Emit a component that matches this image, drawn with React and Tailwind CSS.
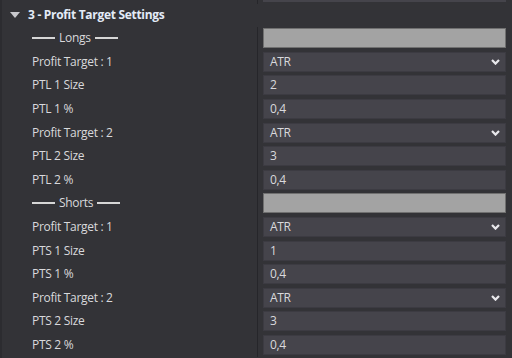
import React from 'react';

const rows = [
  { type: 'sep', label: 'Longs' },
  { type: 'select', label: 'Profit Target : 1', value: 'ATR' },
  { type: 'input', label: 'PTL 1 Size', value: '2' },
  { type: 'input', label: 'PTL 1 %', value: '0,4' },
  { type: 'select', label: 'Profit Target : 2', value: 'ATR' },
  { type: 'input', label: 'PTL 2 Size', value: '3' },
  { type: 'input', label: 'PTL 2 %', value: '0,4' },
  { type: 'sep', label: 'Shorts' },
  { type: 'select', label: 'Profit Target : 1', value: 'ATR' },
  { type: 'input', label: 'PTS 1 Size', value: '1' },
  { type: 'input', label: 'PTS 1 %', value: '0,4' },
  { type: 'select', label: 'Profit Target : 2', value: 'ATR' },
  { type: 'input', label: 'PTS 2 Size', value: '3' },
  { type: 'input', label: 'PTS 2 %', value: '0,4' },
];

const Chevron = () => (
  <svg width="9" height="6" viewBox="0 0 9 6" className="mr-[5px]">
    <path d="M1 1 L4.5 4.6 L8 1" fill="none" stroke="#e8e8ec" strokeWidth="2.2" />
  </svg>
);

const Row = ({ row }) => {
  let field;
  if (row.type === 'sep') {
    field = <div className="h-[20px] bg-[#a3a3a3] border border-[#707070]" />;
  } else {
    field = (
      <div className="h-[20px] bg-[#45444b] border border-[#3c3b42] flex items-center justify-between pl-[6px]">
        <span>{row.value}</span>
        {row.type === 'select' && <Chevron />}
      </div>
    );
  }

  return (
    <div className="flex h-[23.6px] items-center">
      <div className="w-[255px] pl-[30px] flex items-center">
        {row.type === 'sep' ? (
          <div className="flex items-center gap-[4px]">
            <div className="w-[23px] h-[2px] bg-[#d6d6d6]" />
            <span>{row.label}</span>
            <div className="w-[23px] h-[2px] bg-[#d6d6d6]" />
          </div>
        ) : (
          <span>{row.label}</span>
        )}
      </div>
      <div className="w-[1px] self-stretch bg-[#26262a]" />
      <div className="flex-1 pl-[5px] pr-[6px]">{field}</div>
    </div>
  );
};

const App = () => {
  return (
    <div
      className="w-[512px] h-[358px] overflow-hidden bg-[#333337] text-[#d9d9dc] text-[12px] tracking-[-0.3px] border-l-2 border-[#2c2c30]"
      style={{ fontFamily: '"Open Sans", "Noto Sans", sans-serif' }}
    >
      {/* previous row remnant */}
      <div className="flex h-[4px]">
        <div className="w-[255px]" />
        <div className="w-[1px] bg-[#26262a]" />
        <div className="flex-1 pl-[5px] pr-[6px]">
          <div className="h-[2px] bg-[#45444b]" />
        </div>
      </div>

      {/* section header */}
      <div className="flex items-center h-[22.5px] pl-[8px]">
        <svg width="10" height="6" viewBox="0 0 10 6" className="mr-[8px]">
          <path d="M0 0 L10 0 L5 6 Z" fill="#c8c8cc" />
        </svg>
        <span className="font-bold text-[#e3ebf7]">3 - Profit Target Settings</span>
      </div>

      {rows.map((row, i) => (
        <Row key={i} row={row} />
      ))}
    </div>
  );
};

export default App;
